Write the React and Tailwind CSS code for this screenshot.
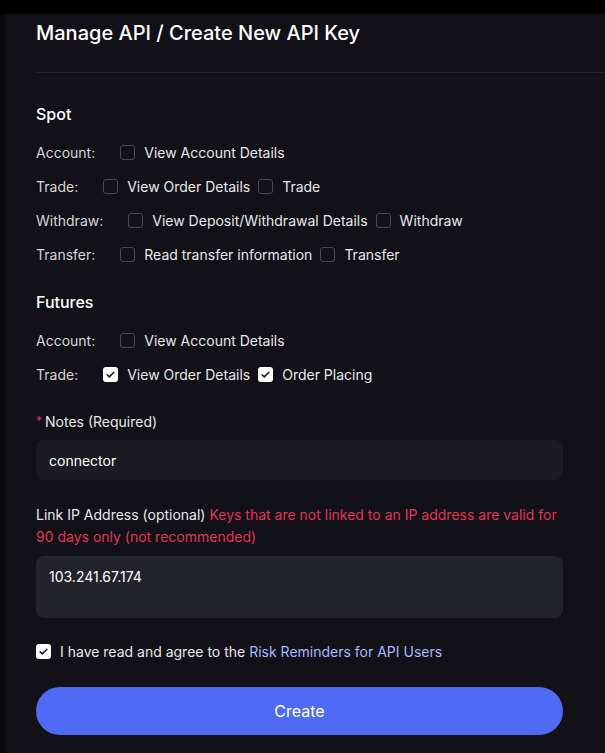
import React, { useState } from 'react';

const font = { fontFamily: 'Inter, "Noto Sans", sans-serif' };

function Box({ checked, onClick }) {
  return (
    <button
      type="button"
      onClick={onClick}
      className={`w-[15px] h-[15px] rounded-[3px] flex items-center justify-center shrink-0 ${
        checked ? 'bg-white' : 'border border-[#4a4a52] bg-transparent'
      }`}
    >
      {checked && (
        <svg viewBox="0 0 12 12" className="w-[11px] h-[11px]">
          <path d="M2.3 6.2l2.4 2.4 5-5" fill="none" stroke="#111117" strokeWidth="1.6" strokeLinecap="round" strokeLinejoin="round" />
        </svg>
      )}
    </button>
  );
}

function PermRow({ label, items, state, toggle }) {
  return (
    <div className="flex items-center h-[34px] text-[14px]">
      <span className="text-[#d6d6da] mr-[25px]">{label}:</span>
      {items.map((it) => (
        <div key={it} className="flex items-center gap-[9px] mr-2">
          <Box checked={!!state[it]} onClick={() => toggle(it)} />
          <span className="text-[#e8e8ea]">{it.split('|')[1]}</span>
        </div>
      ))}
    </div>
  );
}

export default function App() {
  const [perms, setPerms] = useState({
    'f-trade|View Order Details': true,
    'f-trade|Order Placing': true,
  });
  const [agree, setAgree] = useState(true);
  const toggle = (k) => setPerms((p) => ({ ...p, [k]: !p[k] }));

  return (
    <div className="min-h-screen bg-black pt-[14px]" style={font}>
      <div className="flex min-h-[739px]">
        <div className="w-[5px] bg-[#0a0a0d] shrink-0" />
        <div className="flex-1 bg-[#111117] pl-[31px]">
          <div className="pr-[42px]">
            <h1 className="text-[20px] font-medium text-white h-[38px] flex items-center">Manage API / Create New API Key</h1>
          </div>
          <div className="mt-[20px] border-t border-[#222228]" />

          <div className="pr-[42px]">
            <h2 className="text-[16px] font-medium text-white mt-[30px] mb-[10px] h-[22px] flex items-center">Spot</h2>
            <PermRow label="Account" items={['s-acc|View Account Details']} state={perms} toggle={toggle} />
            <PermRow label="Trade" items={['s-trade|View Order Details', 's-trade|Trade']} state={perms} toggle={toggle} />
            <PermRow label="Withdraw" items={['s-wd|View Deposit/Withdrawal Details', 's-wd|Withdraw']} state={perms} toggle={toggle} />
            <PermRow label="Transfer" items={['s-tr|Read transfer information', 's-tr|Transfer']} state={perms} toggle={toggle} />

            <h2 className="text-[16px] font-medium text-white mt-[20px] mb-[10px] h-[22px] flex items-center">Futures</h2>
            <PermRow label="Account" items={['f-acc|View Account Details']} state={perms} toggle={toggle} />
            <PermRow label="Trade" items={['f-trade|View Order Details', 'f-trade|Order Placing']} state={perms} toggle={toggle} />

            <div className="mt-[20px] text-[14px] text-[#e8e8ea] flex items-center h-[20px]">
              <span className="text-[#e0365a] mr-[3px] text-[12px]">*</span>Notes (Required)
            </div>
            <input
              defaultValue="connector"
              className="mt-[9px] w-full h-[40px] rounded-[8px] bg-[#1b1b21] px-[13px] text-[14px] text-white outline-none"
            />

            <p className="mt-[24px] text-[14px] leading-[22px] text-[#e8e8ea]">
              Link IP Address (optional){' '}
              <span className="text-[#e0365a]">Keys that are not linked to an IP address are valid for 90 days only (not recommended)</span>
            </p>
            <textarea
              defaultValue="103.241.67.174"
              className="mt-[8px] w-full h-[62px] rounded-[8px] bg-[#23232b] px-[13px] py-[10px] text-[14px] text-white outline-none resize-none block"
            />

            <div className="mt-[23px] flex items-center gap-[9px] text-[14px] h-[20px]">
              <Box checked={agree} onClick={() => setAgree(!agree)} />
              <span className="text-[#e8e8ea]">
                I have read and agree to the <span className="text-[#a9b8ff]">Risk Reminders for API Users</span>
              </span>
            </div>

            <button
              type="button"
              className="mt-[26px] w-full h-[48px] rounded-full bg-[#4f6af3] text-white text-[16px]"
            >
              Create
            </button>
          </div>
        </div>
      </div>
    </div>
  );
}
